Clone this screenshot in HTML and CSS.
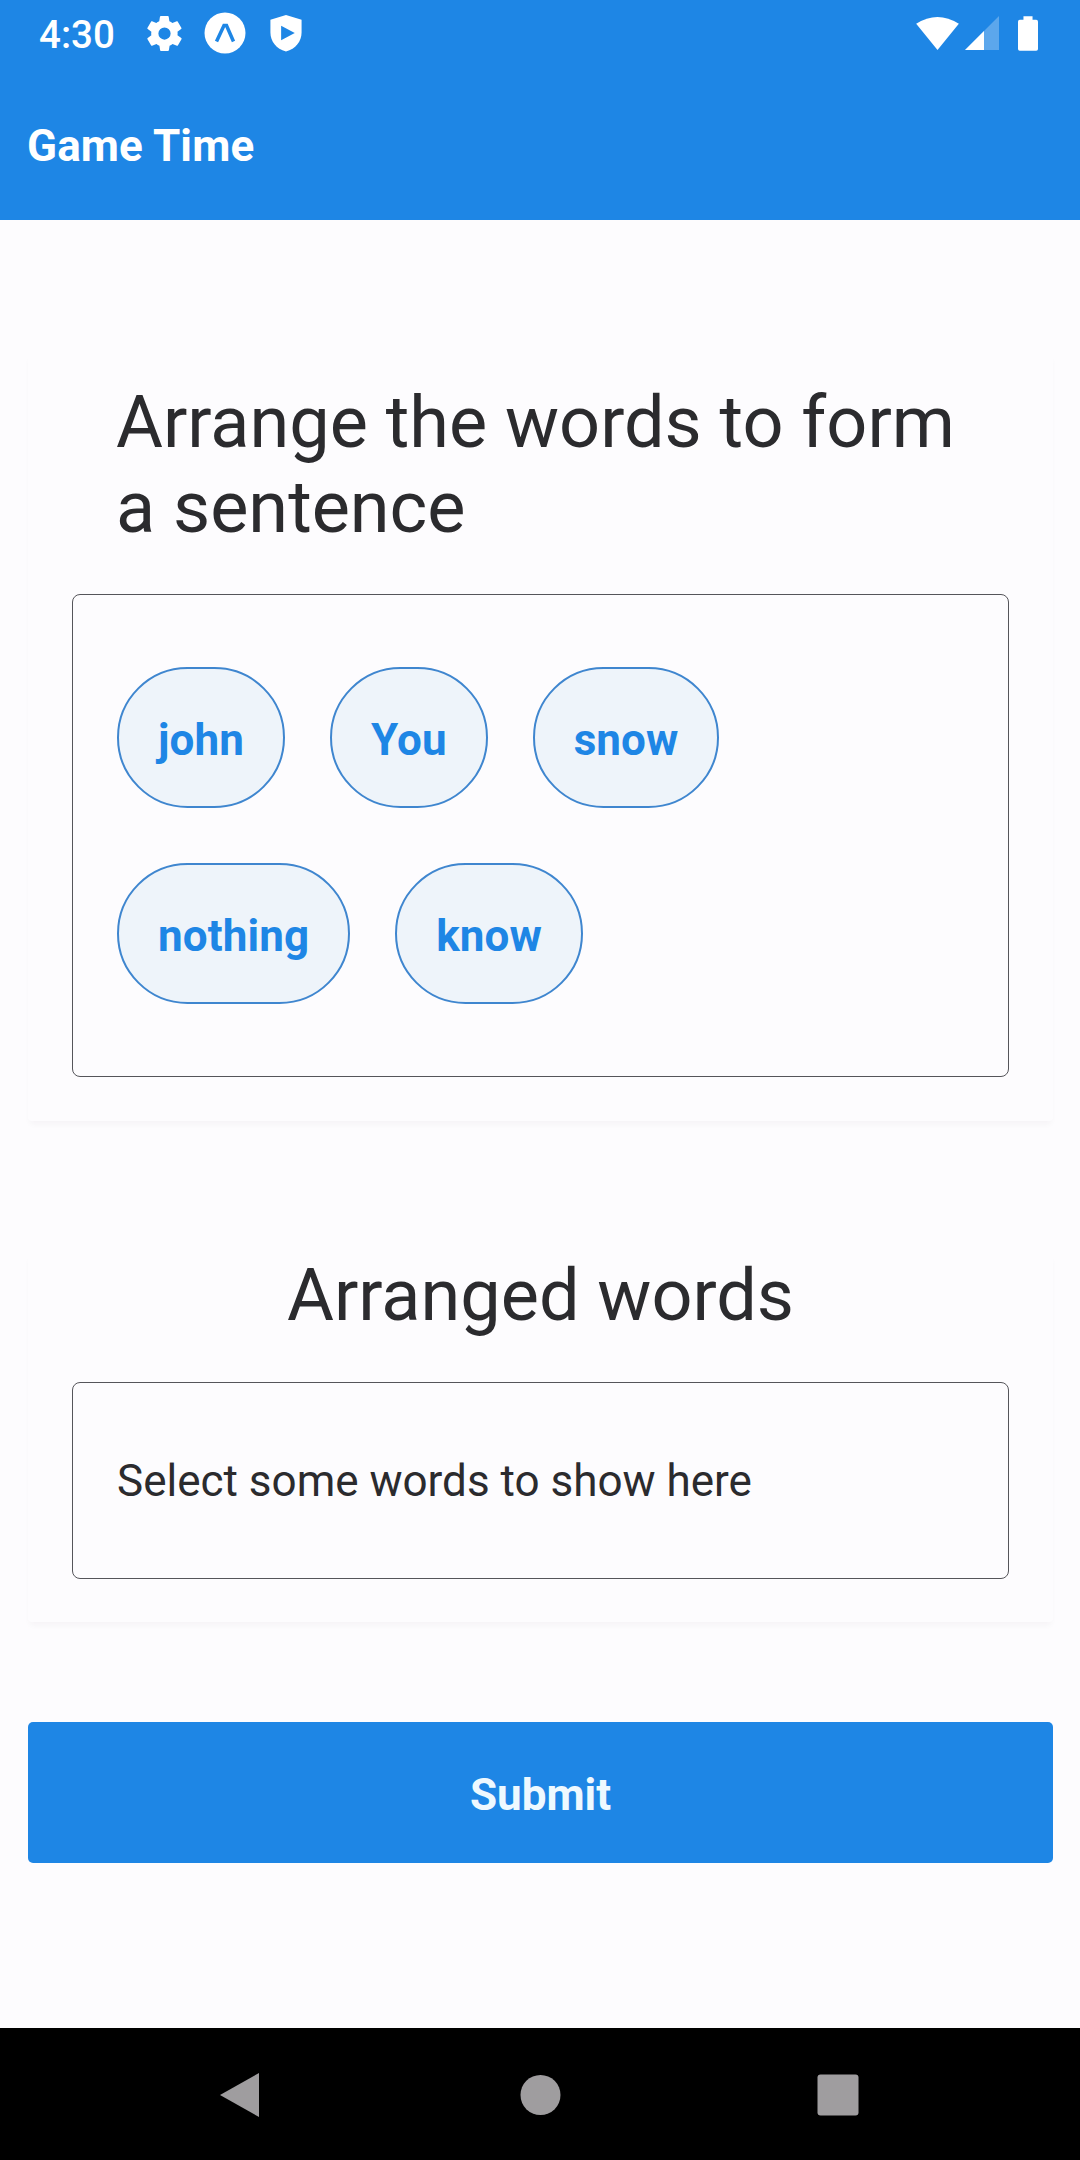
FILE: index.html
```html
<!DOCTYPE html>
<html lang="en">
<head>
<meta charset="utf-8">
<title>Game Time</title>
<link rel="stylesheet" href="styles.css">
</head>
<body>
<div class="screen">
  <header class="top">
    <div class="status">
      <span class="clock">4:30</span>
      <svg class="gear" viewBox="2 2 20 20"><path fill-rule="evenodd" d="M19.4 13c0-.3.1-.6.1-1s0-.7-.1-1l2.1-1.6c.2-.2.3-.5.1-.7l-2-3.400c-.1-.3-.4-.3-.6-.3l-2.500 1c-.5-.4-1.100-.7-1.700-1l-.4-2.600c0-.2-.2-.4-.5-.4h-4c-.2 0-.4.2-.5.4l-.4 2.600c-.6.3-1.200.6-1.700 1l-2.400-1c-.3 0-.5 0-.6.3l-2 3.400c-.2.2-.1.5.1.7L4.500 11c0 .3-.1.6-.1 1s0 .7.1 1l-2.100 1.600c-.2.200-.3.500-.1.700l2 3.400c.1.300.4.300.6.300l2.500-1c.5.400 1.100.700 1.700 1l.4 2.600c0 .2.200.4.500.4h4c.2 0 .4-.2.500-.4l.4-2.600c.6-.3 1.200-.6 1.700-1l2.500 1c.2.100.5 0 .6-.3l2-3.400c.1-.2.100-.5-.1-.7zM12 15.500a3.500 3.500 0 1 1 0-7 3.500 3.500 0 0 1 0 7z"/></svg>
      <svg class="expo" viewBox="0 0 42 42"><circle cx="21" cy="21" r="20.500"/><path class="expo-mark" d="M12.500 29.500 20 13.500h2.500l7 16"/></svg>
      <svg class="shield" viewBox="0 0 32 38"><path fill-rule="evenodd" d="M16 0 32 5v13c0 9-6 17-16 19.500C6 35 0 27 0 18V5zM11 11v15l14-7.500z"/></svg>
      <span class="grow"></span>
      <svg class="wifi" viewBox="0 0 44 34"><path d="M0 7Q22-7 44 7L22 34z"/></svg>
      <svg class="signal" viewBox="0 0 34 34"><path opacity=".28" d="M34 0v34H0z"/><path d="M19 15v19H0z"/></svg>
      <svg class="battery" viewBox="0 0 22 38"><path d="M6 0h10v4h4q2 0 2 2v30q0 2-2 2H2q-2 0-2-2V6q0-2 2-2h4z"/></svg>
    </div>
    <h1 class="title">Game Time</h1>
  </header>
  <main class="content">
    <section class="card">
      <h2 class="heading">Arrange the words to form a sentence</h2>
      <div class="box words">
        <button class="chip">john</button>
        <button class="chip">You</button>
        <button class="chip">snow</button>
        <button class="chip">nothing</button>
        <button class="chip">know</button>
      </div>
    </section>
    <section class="card arranged">
      <h2 class="heading centered">Arranged words</h2>
      <div class="box answer">Select some words to show here</div>
    </section>
    <button class="submit">Submit</button>
  </main>
  <nav class="nav">
    <svg class="nav-icon" viewBox="0 0 46 46"><path d="M40 1v44L1 23z"/></svg>
    <svg class="nav-icon" viewBox="0 0 46 46"><circle cx="23.500" cy="23" r="20"/></svg>
    <svg class="nav-icon" viewBox="0 0 46 46"><rect x="2.500" y="2.500" width="41" height="41" rx="3"/></svg>
  </nav>
</div>
</body>
</html>
```
FILE: styles.css
```css
* { box-sizing: border-box; }
body {
  margin: 0;
  font-family: Roboto, sans-serif;
  color: #2b2b2e;
  background: #fdfcfe;
}
h1, h2 { margin: 0; }
button { font-family: inherit; padding: 0; }
svg { display: block; flex: none; }

.screen {
  width: 1080px;
  height: 2160px;
  display: flex;
  flex-direction: column;
}

/* Status bar and app bar */
.top { height: 220px; background: #1e86e5; color: #fff; }
.status {
  height: 66px;
  padding: 0 41px 0 39px;
  display: flex;
  align-items: center;
}
.status svg { fill: #fff; }
.clock { width: 108px; font-size: 38.5px; font-weight: 500; line-height: 64px; padding-top: 4px; }
.gear { width: 35px; height: 35px; }
.expo { width: 42px; height: 42px; margin-left: 22px; }
.status .expo-mark { fill: none; stroke: #1e86e5; stroke-width: 3.5; }
.shield { width: 32px; height: 37px; margin-left: 24px; }
.grow { flex: 1; }
.wifi { width: 43px; height: 33px; }
.signal { width: 34px; height: 34px; margin-left: 6px; }
.battery { width: 20px; height: 37px; margin: 0 1px 0 19px; }
.title {
  padding: 52px 27px 0;
  font-size: 44px;
  font-weight: 700;
  line-height: 56px;
  letter-spacing: .15px;
}

/* Cards */
.content { flex: 1; padding: 132px 27px 0 28px; }
.card {
  height: 769px;
  padding: 28px 44px 0;
  border-radius: 4px;
  box-shadow: 0 5px 6px -2px rgba(40, 20, 50, .04);
}
.heading {
  height: 214px;
  padding: 0 44px;
  font-size: 72px;
  font-weight: 400;
  line-height: 85px;
}
.box { border: 1px solid #55555a; border-radius: 8px; }
.words {
  height: 483px;
  padding: 72px 44px;
  display: flex;
  flex-wrap: wrap;
  align-content: flex-start;
  gap: 55px 45px;
}
.chip {
  height: 141px;
  padding: 5px 39px 0;
  border: 2px solid #3f86cf;
  border-radius: 71px;
  background: #eef4fa;
  color: #1e86e5;
  font-size: 44px;
  font-weight: 700;
  letter-spacing: .1px;
}
.arranged { height: 370px; margin-top: 131px; padding-top: 1px; }
.centered { height: 129px; padding: 0; text-align: center; }
.answer { height: 197px; padding: 1px 44px 0; font-size: 44px; line-height: 195px; }
.submit {
  display: block;
  width: 100%;
  height: 141px;
  margin-top: 100px;
  padding-top: 4px;
  border: 0;
  border-radius: 5px;
  background: #1e86e5;
  color: #eef9ff;
  font-size: 44px;
  font-weight: 700;
}

/* Android navigation bar */
.nav {
  height: 132px;
  padding: 1px 219px 0;
  display: flex;
  justify-content: space-between;
  align-items: center;
  background: #000;
}
.nav-icon { width: 46px; height: 46px; fill: #9f9d9f; }
```
